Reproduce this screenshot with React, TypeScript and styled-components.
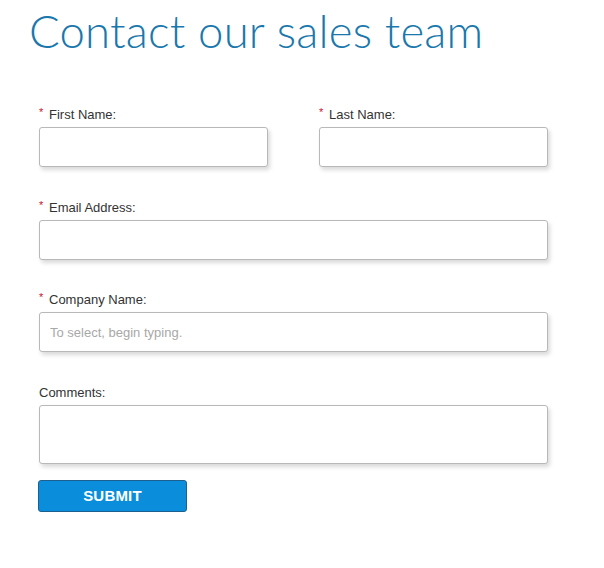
import React from "react";
import styled, { createGlobalStyle } from "styled-components";

const Global = createGlobalStyle`
  html, body { margin: 0; padding: 0; background: #fff; }
  body { font-family: "Liberation Sans", Arial, sans-serif; }
  * { box-sizing: border-box; }
`;

const Page = styled.div`
  padding: 4px 0 0 29px;
  width: 604px;
`;

const Title = styled.h1`
  margin: 0;
  font-family: Lato, "Open Sans", sans-serif;
  font-weight: 300;
  font-size: 45.5px;
  line-height: 54px;
  color: #1a78ad;
  letter-spacing: 0.2px;
`;

const Form = styled.form`
  margin: 49px 0 0 10px;
  width: 509px;
  display: flex;
  flex-direction: column;
  gap: 32.5px;
`;

const Row = styled.div`
  display: grid;
  grid-template-columns: 229px 229px;
  column-gap: 51px;
`;

const Field = styled.div`
  display: flex;
  flex-direction: column;
  gap: 5px;
`;

const Label = styled.label`
  font-size: 13px;
  line-height: 15px;
  color: #333;
  display: flex;
  align-items: flex-start;
`;

const Star = styled.span`
  color: #c8102e;
  font-size: 11px;
  line-height: 11px;
  width: 10px;
`;

const Input = styled.input`
  height: 40px;
  width: 100%;
  border: 1px solid #b8b8b8;
  border-radius: 3px;
  box-shadow: 2px 3px 4px rgba(0, 0, 0, 0.15);
  background: #fff;
  padding: 0 10px;
  font-family: "Liberation Sans", Arial, sans-serif;
  font-size: 13px;
  color: #333;
  outline: none;
  &::placeholder { color: #a8a8a8; }
`;

const Area = styled.textarea`
  display: block;
  height: 59px;
  width: 100%;
  border: 1px solid #b8b8b8;
  border-radius: 3px;
  box-shadow: 2px 3px 4px rgba(0, 0, 0, 0.15);
  background: #fff;
  resize: none;
  outline: none;
  padding: 8px 10px;
`;

const Bottom = styled.div`
  display: flex;
  flex-direction: column;
  gap: 16px;
`;

const Submit = styled.button`
  margin-left: -1px;
  width: 149px;
  height: 32px;
  border: 1px solid #1d5f8f;
  border-radius: 3px;
  background: #0a8edb;
  color: #fff;
  font-family: "Liberation Sans", Arial, sans-serif;
  font-weight: 700;
  font-size: 15px;
  letter-spacing: 0.2px;
  padding: 0 0 1px 0;
`;

const Req = ({ children }: { children: React.ReactNode }) => (
  <Label>
    <Star>*</Star>
    {children}
  </Label>
);

export default function App() {
  return (
    <>
      <Global />
      <Page>
        <Title>Contact our sales team</Title>
        <Form onSubmit={(e) => e.preventDefault()}>
          <Row>
            <Field>
              <Req>First Name:</Req>
              <Input />
            </Field>
            <Field>
              <Req>Last Name:</Req>
              <Input />
            </Field>
          </Row>
          <Field>
            <Req>Email Address:</Req>
            <Input />
          </Field>
          <Field>
            <Req>Company Name:</Req>
            <Input placeholder="To select, begin typing." />
          </Field>
          <Bottom>
            <Field>
              <Label>Comments:</Label>
              <Area />
            </Field>
            <Submit type="submit">SUBMIT</Submit>
          </Bottom>
        </Form>
      </Page>
    </>
  );
}
